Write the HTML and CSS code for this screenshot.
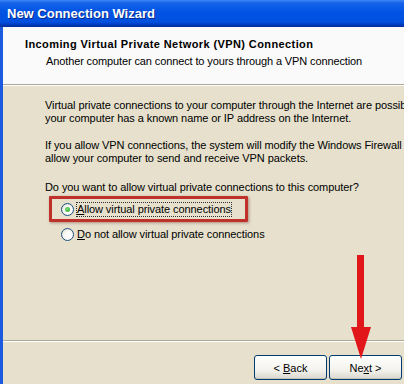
FILE: index.html
```html
<!DOCTYPE html>
<html lang="en">
<head>
  <meta charset="UTF-8" />
  <title>New Connection Wizard</title>
  <link rel="stylesheet" href="styles.css">
</head>
<body>
  <div class="window">
    <div class="titlebar">New Connection Wizard</div>
    <div class="frame">
      <div class="header">
        <div class="header-title">Incoming Virtual Private Network (VPN) Connection</div>
        <div class="header-sub">Another computer can connect to yours through a VPN connection</div>
      </div>
      <div class="content">
        <p>Virtual private connections to your computer through the Internet are possible only if<br>your computer has a known name or IP address on the Internet.</p>
        <p class="firewall">If you allow VPN connections, the system will modify the Windows Firewall settings to<br>allow your computer to send and receive VPN packets.</p>
        <p class="question">Do you want to allow virtual private connections to this computer?</p>
        <div class="options">
          <label class="option highlight">
            <span class="radio checked"></span>
            <span class="focus"><u>A</u>llow virtual private connections</span>
          </label>
          <label class="option">
            <span class="radio"></span>
            <span><u>D</u>o not allow virtual private connections</span>
          </label>
        </div>
      </div>
      <div class="footer">
        <button class="btn">&lt; <u>B</u>ack</button>
        <button class="btn">Ne<u>x</u>t &gt;</button>
      </div>
    </div>
    <svg class="arrow" width="26" height="106" viewBox="0 0 26 106">
      <rect x="9" y="0" width="7" height="76" fill="#e0161a" />
      <polygon points="3,72 23,72 13,104" fill="#e0161a" />
    </svg>
  </div>
</body>
</html>
```
FILE: styles.css
```css
body {
  margin: 0;
  padding: 0;
  font-family: 'Liberation Sans', Arial, sans-serif;
  font-size: 11px;
  color: #000;
}

.window {
  position: relative;
  width: 404px;
  height: 384px;
  overflow: hidden;
  background-color: #e6e0cc;
}

.titlebar {
  height: 27px;
  box-sizing: border-box;
  padding: 6px 0 0 7px;
  font-size: 13px;
  font-weight: bold;
  color: #fff;
  text-shadow: 1px 1px 0 #0a2a8a;
  background: linear-gradient(#3d86f5 0, #1563e8 3px, #0153e4 12px, #0150e0 22px, #003ab8 25px, #002f9a 27px);
}

.frame {
  height: 357px;
  border-left: 3px solid #1c5ae0;
  display: flex;
  flex-direction: column;
}

.header {
  height: 58px;
  box-sizing: border-box;
  padding: 10px 0 0 22px;
  background-color: #fafafa;
  border-bottom: 1px solid #aca899;
  box-shadow: 0 1px 0 #fff;
}

.header-title {
  font-weight: bold;
  font-size: 11px;
  line-height: 14px;
  letter-spacing: 0.4px;
}

.header-sub {
  margin-top: 3px;
  padding-left: 21px;
  line-height: 14px;
  letter-spacing: -0.12px;
}

.content {
  flex: 1;
  padding: 14px 0 0 42px;
  white-space: nowrap;
  letter-spacing: -0.08px;
}

.content p {
  margin: 0 0 14px 0;
  line-height: 13px;
}

.content p.firewall {
  margin-bottom: 16px;
}

.content p.question {
  margin-bottom: 2px;
}

.options {
  display: flex;
  flex-direction: column;
  gap: 2px;
}

.option {
  display: flex;
  align-items: center;
  gap: 3px;
  height: 20px;
  padding-left: 16px;
}

.option.highlight {
  box-sizing: border-box;
  width: 199px;
  height: 26px;
  border: 3px solid #bf312b;
  margin-left: 4px;
  border-radius: 1px;
  box-shadow: 1px 1px 3px rgba(120, 60, 50, 0.5);
  padding-left: 9px;
}

.radio {
  flex-shrink: 0;
  box-sizing: border-box;
  width: 13px;
  height: 13px;
  border-radius: 50%;
  border: 1px solid #1c5180;
  background: radial-gradient(circle at 60% 60%, #fff 30%, #dcd9cc 100%);
  display: flex;
  align-items: center;
  justify-content: center;
}

.radio.checked::after {
  content: '';
  width: 5px;
  height: 5px;
  border-radius: 50%;
  background: radial-gradient(circle at 40% 40%, #7ee07a, #21a121);
}

.focus {
  outline: 1px dotted #333;
  outline-offset: 0;
  line-height: 13px;
}

.footer {
  box-sizing: border-box;
  height: 44px;
  border-top: 1px solid #aca899;
  box-shadow: inset 0 1px 0 #fff;
  display: flex;
  justify-content: flex-end;
  align-items: flex-start;
  gap: 2px;
  padding: 14px 2px 0 0;
}

.btn {
  width: 73px;
  height: 25px;
  font-family: 'Liberation Sans', Arial, sans-serif;
  font-size: 11px;
  color: #000;
  border: 1px solid #003c74;
  border-radius: 3px;
  background: linear-gradient(#ffffff, #f4f3ee 60%, #d8d6cc);
  box-shadow: inset 0 -1px 0 #c6c3b5;
  padding: 0;
}

.arrow {
  position: absolute;
  left: 348px;
  top: 255px;
}
```
